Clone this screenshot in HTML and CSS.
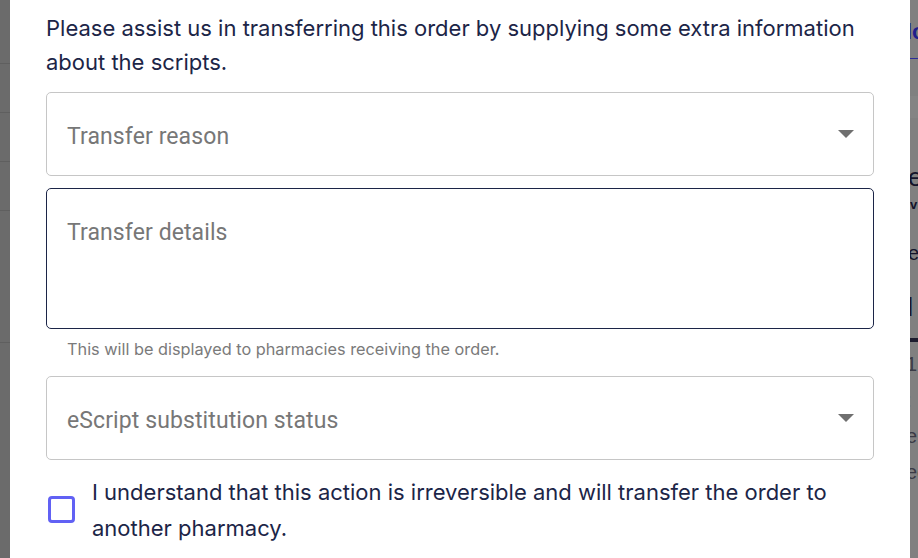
FILE: index.html
```html
<!DOCTYPE html>
<html>
<head>
<meta charset="utf-8">
<link rel="stylesheet" href="styles.css">
</head>
<body>
<div class="screen">
  <div class="side-left">
    <div class="row r1"></div>
    <div class="row r2"></div>
    <div class="row r3"></div>
    <div class="row r4"></div>
    <div class="row r5"></div>
  </div>
  <div class="modal">
    <p class="intro">Please assist us in transferring this order by supplying some extra information about the scripts.</p>
    <div class="select">
      <span class="placeholder">Transfer reason</span>
      <span class="caret"></span>
    </div>
    <div class="textarea">
      <span class="placeholder">Transfer details</span>
    </div>
    <p class="helper">This will be displayed to pharmacies receiving the order.</p>
    <div class="select">
      <span class="placeholder">eScript substitution status</span>
      <span class="caret"></span>
    </div>
    <label class="check">
      <span class="box"></span>
      <span class="check-text">I understand that this action is irreversible and will transfer the order to another pharmacy.</span>
    </label>
  </div>
  <div class="side-right">
    <div class="frag link">lo</div>
    <div class="frag band"></div>
    <div class="frag big">e</div>
    <div class="frag small">v</div>
    <div class="frag mid">e</div>
    <div class="frag mid">|</div>
    <div class="frag rule"></div>
    <div class="frag mid2">1</div>
    <div class="frag mid2">:</div>
    <div class="frag mid2">e</div>
    <div class="frag mid2">ec</div>
  </div>
</div>
</body>
</html>
```
FILE: styles.css
```css
* { box-sizing: border-box; }
html, body { margin: 0; padding: 0; }
body {
  width: 918px;
  height: 558px;
  overflow: hidden;
  background: #ffffff;
  font-family: Inter, "Noto Sans", sans-serif;
}
.screen {
  display: flex;
  height: 558px;
}
.side-left {
  width: 10px;
  flex: none;
  background: #6b6b6b;
  display: flex;
  flex-direction: column;
}
.side-left .row { border-bottom: 1px solid #5f5f5f; }
.side-left .r1 { height: 64px; }
.side-left .r2 { height: 49px; }
.side-left .r3 { height: 49px; }
.side-left .r4 { height: 49px; }
.side-left .r5 { height: 132px; }

.modal {
  width: 900px;
  flex: none;
  background: #ffffff;
  padding: 11px 36px 0 36px;
  display: flex;
  flex-direction: column;
}
.intro {
  margin: 0 0 13px 0;
  font-size: 22px;
  line-height: 34px;
  color: #1c2547;
}
.select, .textarea {
  border: 1px solid #c6c6c6;
  border-radius: 5px;
  height: 84px;
  padding: 4px 20px 0 20px;
  display: flex;
  align-items: center;
  justify-content: space-between;
  font-family: Roboto, "Noto Sans", sans-serif;
}
.placeholder {
  font-size: 23px;
  color: #777777;
  letter-spacing: 0.1px;
}
.caret {
  width: 0;
  height: 0;
  border-left: 8px solid transparent;
  border-right: 8px solid transparent;
  border-top: 8px solid #6f6f6f;
  margin-right: -1px;
  margin-top: -4px;
}
.textarea {
  margin-top: 12px;
  height: 141px;
  border-color: #1c2547;
  align-items: flex-start;
  padding-top: 30px;
}
.helper {
  margin: 9px 0 16px 21px;
  font-size: 16.3px;
  line-height: 22px;
  color: #7a7a7a;
}
.check {
  display: flex;
  align-items: center;
  margin-top: 13px;
  gap: 17px;
}
.box {
  width: 27px;
  height: 27px;
  flex: none;
  border: 3px solid #6161f4;
  border-radius: 4px;
  margin-left: 2px;
}
.check-text {
  font-size: 22px;
  line-height: 36px;
  color: #1c2547;
  padding-top: 1px;
}

.side-right {
  width: 8px;
  flex: none;
  background: #808080;
  overflow: hidden;
  display: flex;
  flex-direction: column;
  font-family: "Liberation Sans", sans-serif;
  color: #12132a;
  white-space: nowrap;
}
.frag { flex: none; }
.frag.link {
  color: #1e1e8c;
  font-weight: bold;
  font-size: 22px;
  line-height: 22px;
  margin-top: 21px;
  height: 38px;
  border-bottom: 1px solid #2c2c9a;
  margin-left: -4px;
}
.frag.band { height: 22px; margin-top: 37px; background: #848484; }
.frag.big { font-size: 26px; line-height: 26px; margin-top: 46px; margin-left: -2px; }
.frag.small { font-size: 13px; line-height: 14px; margin-top: 8px; font-weight: bold; }
.frag.mid { font-size: 20px; line-height: 22px; margin-top: 30px; margin-left: -2px; }
.frag.rule { height: 4px; background: #1c1c2e; margin-top: 22px; }
.frag.mid2 { font-size: 20px; line-height: 28px; margin-top: 8px; margin-left: -4px; color: #3a3a45; }
```
